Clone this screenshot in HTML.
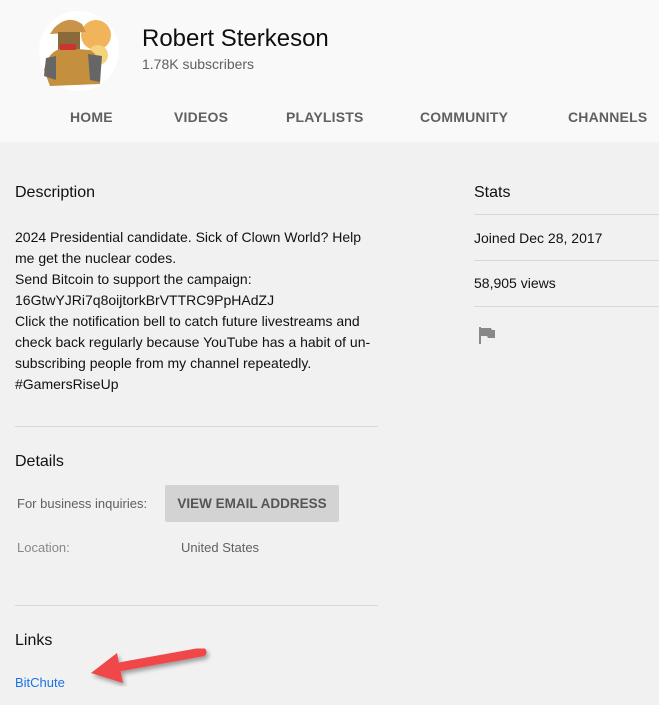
<!DOCTYPE html>
<html><head><meta charset="utf-8"><style>
*{margin:0;padding:0;box-sizing:border-box}
body{width:659px;height:705px;background:#f1f1f1;font-family:"Liberation Sans",Arial,sans-serif;position:relative;overflow:hidden;color:#0f0f0f}
.hdr{position:absolute;left:0;top:0;width:659px;height:142px;background:#f9f9f9}
.a{position:absolute;white-space:nowrap}
.tab{position:absolute;top:109px;font-size:14px;font-weight:bold;color:#606060;letter-spacing:.2px}
.hr{position:absolute;height:1px;background:#d8d8d8}
.t{font-size:14px;line-height:21px;color:#111}
.h{font-size:16px;color:#111}
.lbl{font-size:13px;color:#606060}
</style></head><body>
<div class="hdr"></div>
<svg class="a" style="left:38px;top:10px" width="82" height="82" viewBox="0 0 82 82">
<circle cx="41" cy="41" r="40" fill="#fff"/>
<circle cx="58" cy="25" r="15" fill="#f2b45a"/>
<circle cx="60" cy="45" r="10" fill="#f5d27e"/>
<path d="M16 18 Q30 4 44 14 L48 22 L12 24 Z" fill="#c9944a"/>
<rect x="20" y="22" width="22" height="18" fill="#8a6a3a"/>
<path d="M6 60 Q10 40 26 38 L52 40 Q64 46 62 74 L12 76 Z" fill="#c4903e"/>
<path d="M8 48 L18 46 L18 70 L6 66 Z" fill="#666"/>
<path d="M50 44 L64 46 L62 72 L52 70 Z" fill="#666"/>
<rect x="22" y="34" width="16" height="6" fill="#c33"/>
</svg>
<div class="a" style="left:142px;top:25px;font-size:24px;color:#0f0f0f">Robert Sterkeson</div>
<div class="a" style="left:142px;top:56px;font-size:14px;color:#606060">1.78K subscribers</div>
<div class="tab" style="left:70px">HOME</div>
<div class="tab" style="left:174px">VIDEOS</div>
<div class="tab" style="left:286px">PLAYLISTS</div>
<div class="tab" style="left:420px">COMMUNITY</div>
<div class="tab" style="left:568px">CHANNELS</div>

<div class="a h" style="left:15px;top:184px">Description</div>
<div class="a t" style="left:15px;top:227px">2024 Presidential candidate. Sick of Clown World? Help<br>me get the nuclear codes.<br>Send Bitcoin to support the campaign:<br>16GtwYJRi7q8oijtorkBrVTTRC9PpHAdZJ<br>Click the notification bell to catch future livestreams and<br>check back regularly because YouTube has a habit of un-<br>subscribing people from my channel repeatedly.<br>#GamersRiseUp</div>
<div class="hr" style="left:15px;top:426px;width:363px"></div>
<div class="a h" style="left:15px;top:453px">Details</div>
<div class="a lbl" style="left:17px;top:496px">For business inquiries:</div>
<div class="a" style="left:165px;top:485px;width:174px;height:37px;background:#d3d3d3;color:#555;font-size:13.5px;font-weight:bold;text-align:center;line-height:37px;border-radius:2px">VIEW EMAIL ADDRESS</div>
<div class="a lbl" style="left:17px;top:540px;color:#888">Location:</div>
<div class="a lbl" style="left:181px;top:540px">United States</div>
<div class="hr" style="left:15px;top:605px;width:363px"></div>
<div class="a h" style="left:15px;top:632px">Links</div>
<div class="a" style="left:15px;top:675px;font-size:13px;color:#1a73e8">BitChute</div>
<svg class="a" style="left:85px;top:645px" width="130" height="50" viewBox="0 0 130 50">
<defs><filter id="s"><feDropShadow dx="2" dy="3" stdDeviation="2" flood-opacity=".35"/></filter></defs>
<g filter="url(#s)"><path d="M117 7 L34 22" stroke="#f0474a" stroke-width="9" stroke-linecap="round"/>
<path d="M6 28 L32 8 L38 38 Z" fill="#f0474a"/></g>
</svg>

<div class="a h" style="left:474px;top:184px">Stats</div>
<div class="hr" style="left:474px;top:214px;width:185px"></div>
<div class="a t" style="left:474px;top:228px">Joined Dec 28, 2017</div>
<div class="hr" style="left:474px;top:260px;width:185px"></div>
<div class="a t" style="left:474px;top:273px">58,905 views</div>
<div class="hr" style="left:474px;top:306px;width:185px"></div>
<svg class="a" style="left:478px;top:327px" width="18" height="18" viewBox="0 0 18 18"><path d="M1 0 h2 v17 h-2z M3 1 h10 l1 2 h3 v8 h-7 l-1 -2 h-6z" fill="#888"/></svg>
</body></html>
